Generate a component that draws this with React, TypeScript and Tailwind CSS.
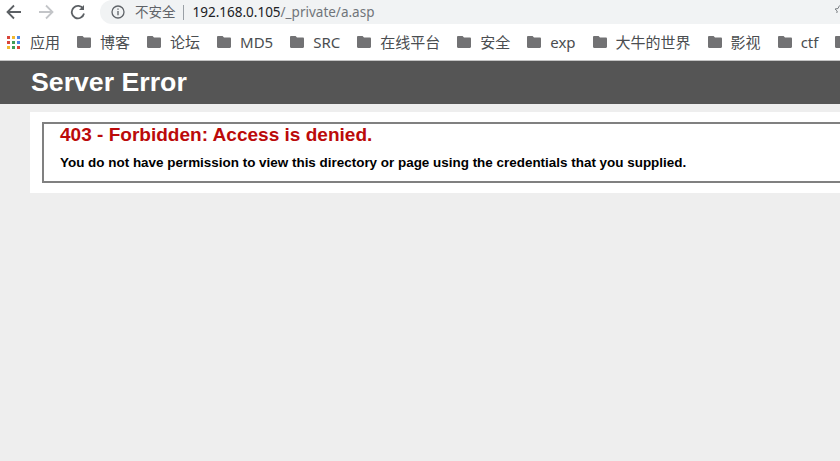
const bookmarks = ["博客", "论坛", "MD5", "SRC", "在线平台", "安全", "exp", "大牛的世界", "影视", "ctf", ""];

const appColors = [
  "bg-[#d9453a]", "bg-[#f1b92e]", "bg-[#4a86e8]",
  "bg-[#d9453a]", "bg-[#3f9d58]", "bg-[#4a86e8]",
  "bg-[#f1b92e]", "bg-[#3f9d58]", "bg-[#d9453a]",
];

const FolderIcon = () => (
  <svg width="14" height="12" viewBox="0 0 15 12" preserveAspectRatio="none" className="shrink-0">
    <path d="M1.2 0H6l1.5 1.6h6.3c.7 0 1.2.5 1.2 1.2v8c0 .7-.5 1.2-1.2 1.2H1.2C.5 12 0 11.500 0 10.800V1.200C0 .5.500 0 1.200 0z" fill="#727274" />
  </svg>
);

const App = () => {
  return (
    <div className="flex h-[461px] w-[840px] flex-col overflow-hidden bg-[#eeeeee] font-['Liberation_Sans',sans-serif]">
      <div className="flex h-6 shrink-0 items-center bg-white">
        <div className="flex w-[100px] shrink-0 items-center pl-[6px]">
          <svg width="16" height="16" viewBox="0 0 16 16" fill="none" stroke="#5c6064" strokeWidth="1.8">
            <path d="M15 8H2M8 1.500 1.500 8 8 14.500" />
          </svg>
          <svg width="16" height="16" viewBox="0 0 16 16" fill="none" stroke="#c3c5c8" strokeWidth="1.8" className="ml-[16px]">
            <path d="M1 8h13M8 1.500 14.500 8 8 14.500" />
          </svg>
          <svg width="16" height="16" viewBox="0 0 16 16" fill="none" stroke="#5c6064" strokeWidth="1.800" className="ml-[16px]">
            <path d="M13.300 5A6.200 6.200 0 1 0 14 9.500" />
            <path d="M14 1v5H9" fill="#5c6064" stroke="none" />
          </svg>
        </div>
        <div className="flex h-6 flex-1 items-center rounded-l-xl bg-[#f1f3f4] pl-[11px] font-['Noto_Sans','Noto_Sans_CJK_SC',sans-serif] text-[13.500px]">
          <svg width="14" height="14" viewBox="0 0 14 14" fill="none" stroke="#5f6368" strokeWidth="1.300" className="shrink-0">
            <circle cx="7" cy="7" r="6" />
            <path d="M7 6v4.200M7 3.400v1.400" />
          </svg>
          <span className="ml-[10px] text-[#5f6368]">不安全</span>
          <span className="ml-[7px] h-[15px] w-px bg-[#9aa0a6]" />
          <span className="ml-[9px] text-[#202124]">192.168.0.105</span>
          <span className="text-[#70757a]">/_private/a.asp</span>
          <svg width="6" height="8" viewBox="0 0 6 8" fill="none" stroke="#7b7f83" strokeWidth="1" className="mt-[-7px] ml-auto">
            <path d="M5.500 .5 4 3.500 1 4 3.200 6 2.800 8" />
          </svg>
        </div>
      </div>

      <div className="flex h-[37px] shrink-0 items-center gap-[17px] overflow-hidden border-b border-[#c4c4c4] bg-white pl-[7px] font-['Noto_Sans','Noto_Sans_CJK_SC',sans-serif] text-[15px] text-[#4a4d50]">
        <div className="flex shrink-0 items-center gap-[10px]">
          <div className="grid w-[13px] grid-cols-3 gap-[2px]">
            {appColors.map((color, i) => (
              <span key={i} className={`h-[3px] w-[3px] ${color}`} />
            ))}
          </div>
          <span>应用</span>
        </div>
        {bookmarks.map((name, i) => (
          <div key={i} className="flex shrink-0 items-center gap-[9px]">
            <FolderIcon />
            <span>{name}</span>
          </div>
        ))}
      </div>

      <div className="flex h-[43px] shrink-0 items-center bg-[#555555] pl-[31px]">
        <h1 className="text-[26.700px] font-bold text-white">Server Error</h1>
      </div>

      <div className="mt-2 ml-[30px] h-[81px] bg-white pt-[10px] pl-3">
        <div className="h-[61px] border-2 border-r-0 border-[#808080] pl-4">
          <h2 className="text-[19.050px] leading-[22px] font-bold text-[#bb0a0a]">403 - Forbidden: Access is denied.</h2>
          <h3 className="mt-[7px] text-[13.440px] font-bold text-black">
            You do not have permission to view this directory or page using the credentials that you supplied.
          </h3>
        </div>
      </div>
    </div>
  );
};

export default App;
